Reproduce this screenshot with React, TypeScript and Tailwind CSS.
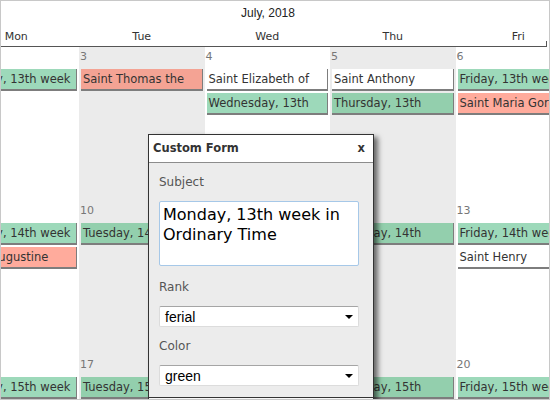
import React from "react";

type Tone = "green" | "salmon" | "white";

interface CalEvent {
  text: string;
  tone: Tone;
}

interface DayCell {
  date: string;
  events: CalEvent[];
}

const DAY_NAMES = ["Mon", "Tue", "Wed", "Thu", "Fri"];

// Tue and Thu columns are shaded
const SHADED = [false, true, false, true, false];

const WEEKS: DayCell[][] = [
  [
    { date: "2", events: [{ text: "Monday, 13th week in Ordinary Time", tone: "green" }] },
    { date: "3", events: [{ text: "Saint Thomas the Apostle", tone: "salmon" }] },
    {
      date: "4",
      events: [
        { text: "Saint Elizabeth of Portugal", tone: "white" },
        { text: "Wednesday, 13th week in Ordinary Time", tone: "green" },
      ],
    },
    {
      date: "5",
      events: [
        { text: "Saint Anthony Zaccaria", tone: "white" },
        { text: "Thursday, 13th week in Ordinary Time", tone: "green" },
      ],
    },
    {
      date: "6",
      events: [
        { text: "Friday, 13th week in Ordinary Time", tone: "green" },
        { text: "Saint Maria Goretti", tone: "salmon" },
      ],
    },
  ],
  [
    {
      date: "9",
      events: [
        { text: "Monday, 14th week in Ordinary Time", tone: "green" },
        { text: "Saint Augustine Zhao Rong", tone: "salmon" },
      ],
    },
    { date: "10", events: [{ text: "Tuesday, 14th week in Ordinary Time", tone: "green" }] },
    { date: "11", events: [{ text: "Saint Benedict", tone: "salmon" }] },
    { date: "12", events: [{ text: "Thursday, 14th week in Ordinary Time", tone: "green" }] },
    {
      date: "13",
      events: [
        { text: "Friday, 14th week in Ordinary Time", tone: "green" },
        { text: "Saint Henry", tone: "white" },
      ],
    },
  ],
  [
    { date: "16", events: [{ text: "Monday, 15th week in Ordinary Time", tone: "green" }] },
    { date: "17", events: [{ text: "Tuesday, 15th week in Ordinary Time", tone: "green" }] },
    { date: "18", events: [{ text: "Wednesday, 15th week in Ordinary Time", tone: "green" }] },
    { date: "19", events: [{ text: "Thursday, 15th week in Ordinary Time", tone: "green" }] },
    { date: "20", events: [{ text: "Friday, 15th week in Ordinary Time", tone: "green" }] },
  ],
];

function toneClass(tone: Tone, shaded: boolean) {
  if (tone === "white") return "bg-white";
  if (tone === "green") return shaded ? "bg-[#93cfad]" : "bg-[#9dd9ba]";
  return shaded ? "bg-[#f4a394]" : "bg-[#ffab9c]";
}

function EventBar({ event, shaded }: { event: CalEvent; shaded: boolean }) {
  return (
    <div
      className={`ml-[2px] mr-[2px] mb-[2px] box-border h-[22px] overflow-hidden border-r border-b-2 border-[#7d7d7d] pl-[2px] text-[11.5px] leading-[20px] text-[#333] ${toneClass(
        event.tone,
        shaded,
      )}`}
    >
      {event.text}
    </div>
  );
}

function Cell({ cell, shaded }: { cell: DayCell; shaded: boolean }) {
  return (
    <div
      className={`h-[154px] w-[125.5px] shrink-0 overflow-hidden pt-[2px] ${
        shaded ? "bg-[#ebebeb]" : "bg-white"
      }`}
    >
      <div className="h-[16px] pl-[1px] text-[11px] leading-[16px] text-[#777]">{cell.date}</div>
      <div className="mt-[4px]">
        {cell.events.map((ev, i) => (
          <EventBar key={i} event={ev} shaded={shaded} />
        ))}
      </div>
    </div>
  );
}

function SelectBox({ value }: { value: string }) {
  return (
    <div className="flex h-[21px] w-[200px] items-center justify-between rounded-[2px] border border-[#dcdcdc] border-t-[#a5a5a5] bg-white pl-[5px] pr-[5px]">
      <span className="font-['Liberation_Sans',Arial,sans-serif] text-[14px] leading-[18px] text-black">
        {value}
      </span>
      <span className="h-0 w-0 border-l-[4px] border-r-[4px] border-t-[4px] border-l-transparent border-r-transparent border-t-black" />
    </div>
  );
}

function CustomForm() {
  return (
    <div className="absolute left-[147px] top-[133px] w-[226px] border border-[#333] bg-[#ececec] shadow-[4px_3px_5px_rgba(0,0,0,0.55)]">
      <div className="flex h-[28px] items-center justify-between border-b border-[#8c8c8c] bg-white pl-[4px] pr-[8px]">
        <span className="text-[11.5px] font-bold text-[#333]">Custom Form</span>
        <span className="text-[11.5px] font-bold text-[#333]">x</span>
      </div>

      <div className="pl-[10px] pt-[12px] pb-[11px]">
        <div className="mb-[12px] text-[12px] leading-[14px] text-[#555]">Subject</div>
        <textarea
          readOnly
          value="Monday, 13th week in Ordinary Time"
          className="block h-[65px] w-[200px] resize-none rounded-[2px] border border-[#a6c8e8] bg-white px-[3px] pt-[3px] text-[16px] leading-[20px] text-black outline-none"
        />

        <div className="mt-[14px] mb-[12px] text-[12px] leading-[14px] text-[#555]">Rank</div>
        <SelectBox value="ferial" />

        <div className="mt-[12px] mb-[12px] text-[12px] leading-[14px] text-[#555]">Color</div>
        <SelectBox value="green" />
      </div>

      <div className="h-[40px] border-t border-[#333] bg-[#f7f7f7]" />
    </div>
  );
}

export default function App() {
  return (
    <div className="relative box-border h-[400px] w-[550px] overflow-hidden border border-[#c8c8c8] bg-white font-['DejaVu_Sans',Verdana,sans-serif]">
      {/* Month title */}
      <div className="h-[26px] pr-[14px] text-center font-['Liberation_Sans',Arial,sans-serif] text-[12px] leading-[24px] text-[#222]">
        July, 2018
      </div>

      {/* Day names */}
      <div className="flex h-[20px] items-end pr-[2px]">
        <div className="flex h-[20px] flex-1 overflow-hidden border-b border-[#555]">
          <div className="ml-[-47.5px] flex">
            {DAY_NAMES.map((d) => (
              <div
                key={d}
                className="w-[125.5px] shrink-0 text-center text-[11px] leading-[19px] text-[#333]"
              >
                {d}
              </div>
            ))}
          </div>
        </div>
        <div className="h-[6px] w-[1px] bg-[#555]" />
      </div>

      {/* Weeks */}
      <div className="overflow-hidden">
        {WEEKS.map((week, wi) => (
          <div key={wi} className="ml-[-47.5px] flex">
            {week.map((cell, ci) => (
              <Cell key={ci} cell={cell} shaded={SHADED[ci]} />
            ))}
          </div>
        ))}
      </div>

      <CustomForm />
    </div>
  );
}
